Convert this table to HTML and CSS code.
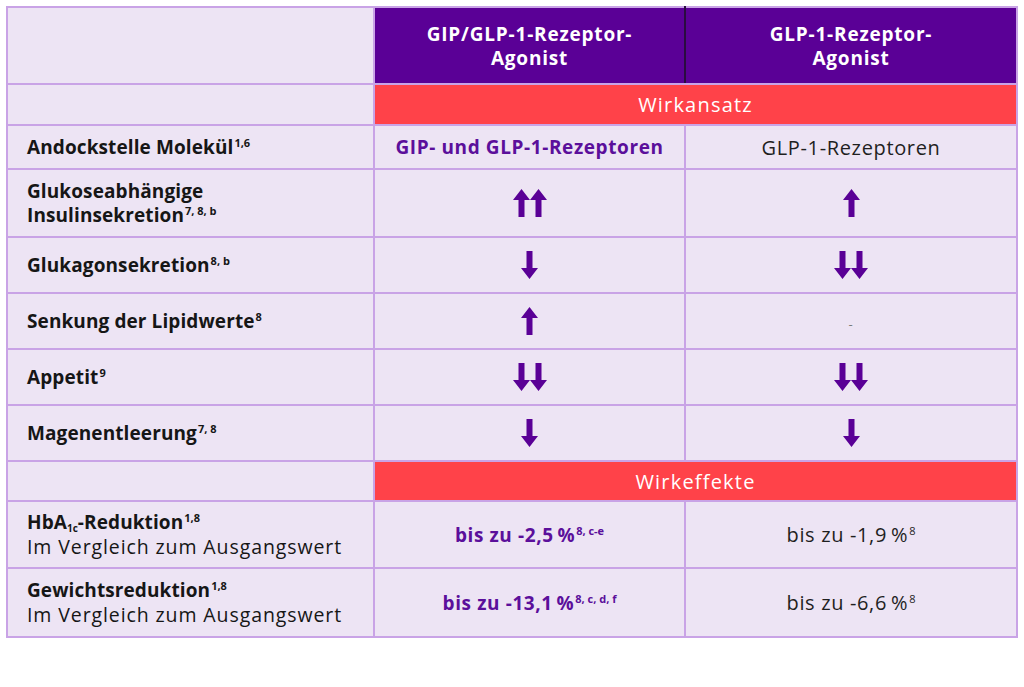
FILE: index.html
```html
<!DOCTYPE html>
<html lang="de">
<head>
<meta charset="utf-8">
<title>GIP/GLP-1 Vergleich</title>
<link rel="stylesheet" href="styles.css">
</head>
<body>
<svg class="defs" width="0" height="0" aria-hidden="true">
  <defs>
    <path id="up" d="M8.5 0 L17 11 L11.5 11 L11.5 28 L5.5 28 L5.5 11 L0 11 Z"/>
    <path id="down" d="M8.5 28 L17 17 L11.5 17 L11.5 0 L5.5 0 L5.5 17 L0 17 Z"/>
  </defs>
</svg>
<table class="cmp">
  <colgroup>
    <col class="c-label">
    <col class="c-a">
    <col class="c-b">
  </colgroup>
  <tr class="r-head">
    <td class="blank"></td>
    <th class="head head-a">GIP/GLP-1-Rezeptor-<br>Agonist</th>
    <th class="head">GLP-1-Rezeptor-<br>Agonist</th>
  </tr>
  <tr class="r-band">
    <td class="blank"></td>
    <td class="band" colspan="2">Wirkansatz</td>
  </tr>
  <tr class="r-andock">
    <td class="label">Andockstelle Molekül<sup class="sup">1,6</sup></td>
    <td class="val strong">GIP- und GLP-1-Rezeptoren</td>
    <td class="val">GLP-1-Rezeptoren</td>
  </tr>
  <tr class="r-gluko">
    <td class="label">Glukoseabhängige<br>Insulinsekretion<sup class="sup">7, 8, b</sup></td>
    <td class="val"><svg class="arr2" viewBox="0 0 34 28"><use href="#up"/><use href="#up" x="17"/></svg></td>
    <td class="val"><svg class="arr1" viewBox="0 0 17 28"><use href="#up"/></svg></td>
  </tr>
  <tr class="r-mid">
    <td class="label">Glukagonsekretion<sup class="sup">8, b</sup></td>
    <td class="val"><svg class="arr1" viewBox="0 0 17 28"><use href="#down"/></svg></td>
    <td class="val"><svg class="arr2" viewBox="0 0 34 28"><use href="#down"/><use href="#down" x="17"/></svg></td>
  </tr>
  <tr class="r-mid">
    <td class="label">Senkung der Lipidwerte<sup class="sup">8</sup></td>
    <td class="val"><svg class="arr1" viewBox="0 0 17 28"><use href="#up"/></svg></td>
    <td class="val"><span class="dash">-</span></td>
  </tr>
  <tr class="r-mid">
    <td class="label">Appetit<sup class="sup">9</sup></td>
    <td class="val"><svg class="arr2" viewBox="0 0 34 28"><use href="#down"/><use href="#down" x="17"/></svg></td>
    <td class="val"><svg class="arr2" viewBox="0 0 34 28"><use href="#down"/><use href="#down" x="17"/></svg></td>
  </tr>
  <tr class="r-mid">
    <td class="label">Magenentleerung<sup class="sup">7, 8</sup></td>
    <td class="val"><svg class="arr1" viewBox="0 0 17 28"><use href="#down"/></svg></td>
    <td class="val"><svg class="arr1" viewBox="0 0 17 28"><use href="#down"/></svg></td>
  </tr>
  <tr class="r-band2">
    <td class="blank"></td>
    <td class="band" colspan="2">Wirkeffekte</td>
  </tr>
  <tr class="r-hba">
    <td class="label">HbA<sub class="sub">1c</sub>-Reduktion<sup class="sup">1,8</sup><br><span class="note">Im Vergleich zum Ausgangswert</span></td>
    <td class="val strong">bis zu -2,5&#8201;%<sup class="sup">8, c-e</sup></td>
    <td class="val">bis zu -1,9&#8201;%<sup class="sup">8</sup></td>
  </tr>
  <tr class="r-gew">
    <td class="label">Gewichtsreduktion<sup class="sup">1,8</sup><br><span class="note">Im Vergleich zum Ausgangswert</span></td>
    <td class="val strong">bis zu -13,1&#8201;%<sup class="sup">8, c, d, f</sup></td>
    <td class="val">bis zu -6,6&#8201;%<sup class="sup">8</sup></td>
  </tr>
</table>
</body>
</html>
```

FILE: styles.css
```css
html, body {
  margin: 0;
  background: #ffffff;
}
body {
  padding: 6px 7px 7px 6px;
  font-family: "Open Sans", "Lato", sans-serif;
  color: #1b1b1b;
}
.defs {
  position: absolute;
  width: 0;
  height: 0;
}
.cmp {
  border-collapse: collapse;
  table-layout: fixed;
  width: 1010px;
  background: #ede4f4;
}
.c-label { width: 367px; }
.c-a { width: 311px; }
.c-b { width: 332px; }
.cmp td, .cmp th {
  border: 2px solid #c9a3e6;
  padding: 0;
  vertical-align: middle;
}
.r-head { height: 77px; }
.r-band { height: 41px; }
.r-andock { height: 44px; }
.r-gluko { height: 68px; }
.r-mid { height: 56px; }
.r-band2 { height: 40px; }
.r-hba { height: 67px; }
.r-gew { height: 69px; }

.head {
  background: #5a0096;
  color: #ffffff;
  font-weight: 700;
  font-size: 19px;
  line-height: 24px;
  letter-spacing: 0.8px;
  text-align: center;
}
.cmp .head-a {
  border-right: 2px solid #2a0c40;
}
.band {
  background: #ff4249;
  color: #ffffff;
  font-size: 20px;
  letter-spacing: 1.2px;
  text-align: center;
}
.label {
  padding-left: 19px !important;
  font-weight: 700;
  font-size: 19px;
  letter-spacing: 0.1px;
  line-height: 24px;
  color: #161616;
}
.note {
  font-weight: 400;
  font-size: 19.5px;
  letter-spacing: 0.9px;
  line-height: 25px;
}
.val {
  text-align: center;
  font-size: 20px;
  letter-spacing: 0.65px;
  color: #1f1f1f;
}
.val.strong {
  font-weight: 700;
  font-size: 19px;
  letter-spacing: 0.6px;
  color: #5b0f9b;
}
.sup {
  font-size: 11px;
  line-height: 0;
  vertical-align: 7px;
  margin-left: 1px;
  letter-spacing: 0;
}
.sub {
  font-size: 10px;
  line-height: 0;
  vertical-align: -3px;
  letter-spacing: 0;
}
.arr1, .arr2 {
  display: block;
  margin: 0 auto;
  height: 28px;
  fill: #5a0096;
}
.arr1 { width: 17px; }
.arr2 { width: 34px; }
.dash {
  font-size: 13px;
  color: #7a7a7a;
}
```
